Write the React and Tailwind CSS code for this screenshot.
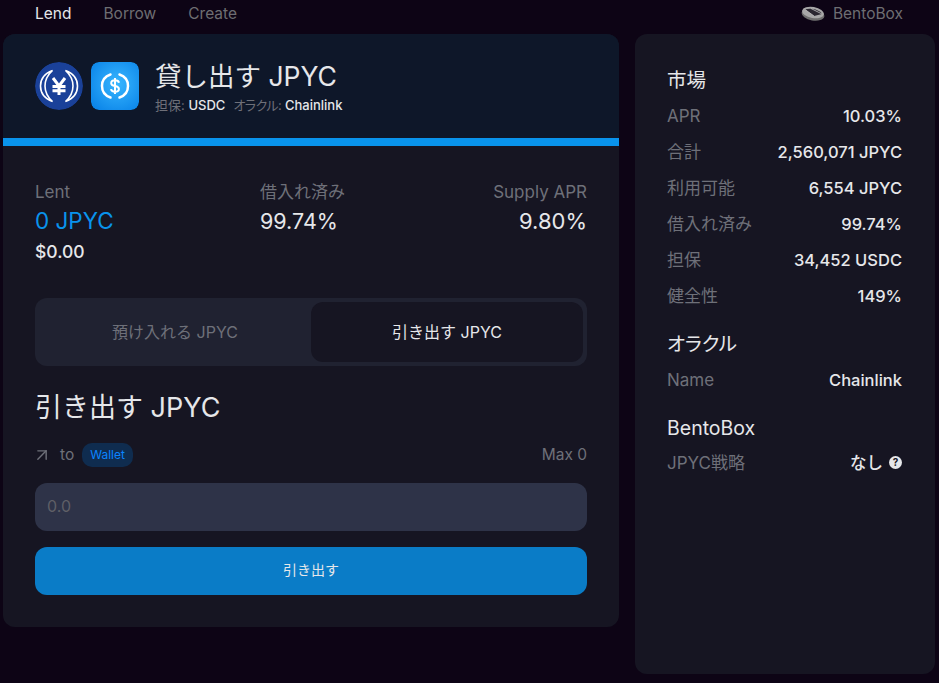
import React from 'react';
import { ArrowUpRight } from 'lucide-react';

const font = 'font-["Inter","Noto_Sans_CJK_JP",sans-serif]';

const JpycIcon = () => (
  <svg width="48" height="48" viewBox="0 0 48 48" className="rounded-full shrink-0">
    <circle cx="24" cy="24" r="24" fill="#1a4199" />
    <path d="M17.500 8.500C9.500 11.500 5.500 17.500 5.500 24C5.500 30.500 9.500 36.500 17.500 39.500C12.500 35 10 30 10 24C10 18 12.500 13 17.500 8.500Z" fill="none" stroke="#fff" strokeWidth="1.600" />
    <path d="M30.500 8.500C38.500 11.500 42.500 17.500 42.500 24C42.500 30.500 38.500 36.500 30.500 39.500C35.500 35 38 30 38 24C38 18 35.500 13 30.500 8.500Z" fill="none" stroke="#fff" strokeWidth="1.600" />
    <path d="M18 16L24 24L30 16M24 24V33M17.500 24.500H30.500M17.500 28.800H30.500" fill="none" stroke="#fff" strokeWidth="3" />
  </svg>
);

const UsdcIcon = () => (
  <svg width="48" height="48" viewBox="0 0 48 48" className="rounded-lg shrink-0">
    <defs>
      <radialGradient id="usdcBg" cx="55%" cy="45%" r="70%">
        <stop offset="0%" stopColor="#38b6ff" />
        <stop offset="100%" stopColor="#0a84e8" />
      </radialGradient>
    </defs>
    <rect width="48" height="48" rx="8" fill="url(#usdcBg)" />
    <path d="M19.500 12.500C14.500 14.200 11 18.500 11 24C11 29.500 14.500 33.800 19.500 35.500" fill="none" stroke="#fff" strokeWidth="2.500" strokeLinecap="round" />
    <path d="M28.500 12.500C33.500 14.200 37 18.500 37 24C37 29.500 33.500 33.800 28.500 35.500" fill="none" stroke="#fff" strokeWidth="2.500" strokeLinecap="round" />
    <path d="M28 20.800C27.600 19 26.200 18.300 24 18.300C21.800 18.300 20.200 19.400 20.200 21.200C20.200 23 21.800 23.600 24 24C26.200 24.400 27.900 25 27.900 26.900C27.900 28.700 26.200 29.700 24 29.700C21.800 29.700 20.300 28.800 20 27.100M24 16V32" fill="none" stroke="#fff" strokeWidth="2" />
  </svg>
);

const BentoLogo = () => (
  <svg width="24" height="15" viewBox="0 0 24 15" className="shrink-0">
    <ellipse cx="12" cy="8.500" rx="11.500" ry="6" fill="#6f6f6f" transform="rotate(10 12 8.500)" />
    <ellipse cx="12" cy="6.500" rx="11" ry="5.500" fill="#a8a8a8" transform="rotate(10 12 6.500)" />
    <path d="M4 3.500L13 10L21 8C19 3.500 9 1.500 4 3.500Z" fill="#2a2730" />
    <path d="M4 3.500L13 10M10 2.500L21 8" stroke="#c4c4c4" strokeWidth="0.800" fill="none" />
  </svg>
);

const Stat = ({ label, value }) => (
  <div className="flex justify-between items-center h-6">
    <div className="pt-0.5 text-[17px] text-[#6e7079]">{label}</div>
    <div className="text-[16.5px] text-[#e6e7ea] font-medium">{value}</div>
  </div>
);

export default function App() {
  return (
    <div className={`w-[939px] h-[683px] overflow-hidden bg-[#0d0415] ${font}`}>
      {/* nav */}
      <div className="flex justify-between items-center h-[34px] pb-[7px] pl-[35px] pr-[36px]">
        <div className="flex gap-8 text-[15.5px]">
          <span className="text-[#e6e7ea]">Lend</span>
          <span className="text-[#6e6e72]">Borrow</span>
          <span className="text-[#6e6e72]">Create</span>
        </div>
        <div className="flex items-center gap-2 text-[15.5px] text-[#6e6e72]">
          <BentoLogo />
          BentoBox
        </div>
      </div>

      <div className="flex items-start pl-[3px] gap-4">
        {/* left panel */}
        <div className="w-[616px] h-[593px] rounded-xl bg-[#161522] overflow-hidden">
          <div className="h-[104px] bg-[#0e1729] flex items-center gap-2 pl-8">
            <div className="flex gap-2">
              <JpycIcon />
              <UsdcIcon />
            </div>
            <div className="ml-2 flex flex-col">
              <div className="text-[26.5px] leading-8 text-[#e6e7ea]">貸し出す JPYC</div>
              <div className="text-[13px] leading-4 mt-[5px] text-[#6e7079] [font-feature-settings:'palt']">
                担保: <span className="text-[#e6e7ea] font-medium mr-2">USDC</span>
                <span className="tracking-[-0.5px]">オラクル:</span> <span className="text-[#e6e7ea] font-medium">Chainlink</span>
              </div>
            </div>
          </div>
          <div className="h-2 bg-[#0993ec]" />

          <div className="px-8">
            <div className="grid grid-cols-[225px_1fr_1fr] pt-[34px] h-[152px]">
              <div>
                <div className="text-[17px] leading-6 text-[#6e7079]">Lent</div>
                <div className="text-[22.5px] leading-8 mt-px text-[#0993ec]">0 JPYC</div>
                <div className="text-[17.5px] leading-6 mt-[3px] text-[#e6e7ea] font-medium">$0.00</div>
              </div>
              <div>
                <div className="text-[17px] leading-6 text-[#6e7079]">借入れ済み</div>
                <div className="text-[21.5px] leading-8 mt-px text-[#e6e7ea]">99.74%</div>
              </div>
              <div className="text-right">
                <div className="text-[17px] leading-6 text-[#6e7079]">Supply APR</div>
                <div className="text-[22px] leading-8 mt-px text-[#e6e7ea]">9.80%</div>
              </div>
            </div>

            <div className="grid grid-cols-2 h-[68px] rounded-xl bg-[#202231] p-1 text-base">
              <div className="flex items-center justify-center text-[#6e7079]">預け入れる JPYC</div>
              <div className="flex items-center justify-center rounded-xl bg-[#161522] text-[#e6e7ea]">引き出す JPYC</div>
            </div>

            <div className="mt-[22px] text-[27px] leading-10 text-[#e6e7ea]">引き出す JPYC</div>

            <div className="mt-[15px] h-6 flex justify-between items-center text-[15.5px] text-[#6e7079]">
              <div className="flex items-center gap-2">
                <ArrowUpRight size={20} strokeWidth={1.7} className="-ml-[3px] -my-1" />
                <span>to</span>
                <span className="h-6 px-2 rounded-[10px] bg-[#0f2c4f] text-[#0a84ff] text-xs flex items-center">Wallet</span>
              </div>
              <span>Max 0</span>
            </div>

            <div className="mt-4 h-12 pb-0.5 rounded-xl bg-[#2e3348] flex items-center px-3 text-base text-[#5f5f66]">0.0</div>
            <div className="mt-4 h-12 pb-0.5 rounded-xl bg-[#0a7cc7] flex items-center justify-center text-sm text-[#e6e7ea]">引き出す</div>
          </div>
        </div>

        {/* right panel */}
        <div className="w-[300px] h-[640px] rounded-xl bg-[#161522] pt-8 pl-8 pr-[33px]">
          <div className="text-[19.5px] leading-7 text-[#e6e7ea]">市場</div>
          <div className="mt-2.5 flex flex-col gap-3">
            <Stat label="APR" value="10.03%" />
            <Stat label="合計" value="2,560,071 JPYC" />
            <Stat label="利用可能" value="6,554 JPYC" />
            <Stat label="借入れ済み" value="99.74%" />
            <Stat label="担保" value="34,452 USDC" />
            <Stat label="健全性" value="149%" />
          </div>
          <div className="mt-[22px] text-[19.5px] leading-7 text-[#e6e7ea] [font-feature-settings:'palt']">オラクル</div>
          <div className="mt-2.5"><Stat label="Name" value="Chainlink" /></div>
          <div className="mt-[22px] text-[19.5px] leading-7 text-[#e6e7ea]">BentoBox</div>
          <div className="mt-[9px] flex justify-between items-center h-6">
            <div className="pt-0.5 text-[17px] text-[#6e7079]">JPYC戦略</div>
            <div className="flex items-center gap-1.5 text-[16.5px] text-[#e6e7ea] font-medium">
              なし
              <span className="w-[13px] h-[13px] rounded-full bg-[#e6e7ea] text-[#161522] text-[10px] font-bold leading-none flex items-center justify-center mb-0.5">?</span>
            </div>
          </div>
        </div>
      </div>
    </div>
  );
}
